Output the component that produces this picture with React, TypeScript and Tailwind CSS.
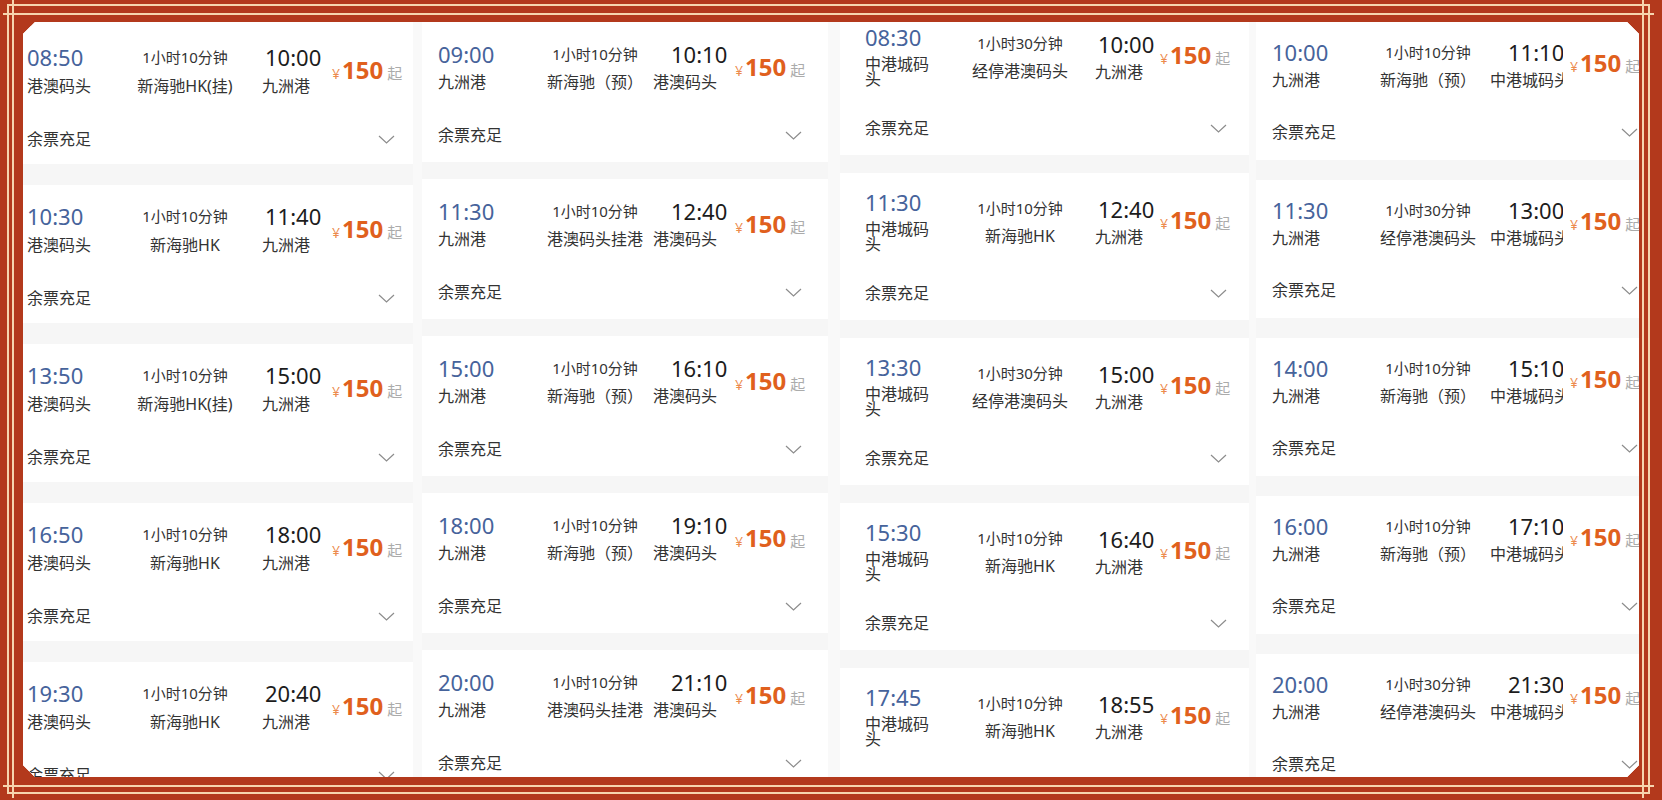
import React from "react";

type Trip = [string, string, string, string, string, string];

type Col = {
  box: string;
  card: string;
  band: string;
  top: string;
  time: string;
  station: string;
  dur: string;
  via: string;
  arr: string;
  to: string;
  price: string;
  bottom: string;
  trips: Trip[];
};

const columns: Col[] = [
  {
    box: "w-[390px] pt-[4px]",
    card: "h-[138px]",
    band: "h-[21px]",
    top: "h-[102px] pl-[4px] pt-[17px]",
    time: "w-[103px]",
    station: "mt-[4px] leading-[22px] whitespace-nowrap",
    dur: "w-[110px]",
    via: "mt-[4px]",
    arr: "ml-[22px] w-[70px]",
    to: "mt-[4px]",
    price: "mt-[12px]",
    bottom: "pl-[4px] pr-[18px]",
    trips: [
      ["08:50", "港澳码头", "1小时10分钟", "新海驰HK(挂)", "10:00", "九洲港"],
      ["10:30", "港澳码头", "1小时10分钟", "新海驰HK", "11:40", "九洲港"],
      ["13:50", "港澳码头", "1小时10分钟", "新海驰HK(挂)", "15:00", "九洲港"],
      ["16:50", "港澳码头", "1小时10分钟", "新海驰HK", "18:00", "九洲港"],
      ["19:30", "港澳码头", "1小时10分钟", "新海驰HK", "20:40", "九洲港"],
    ],
  },
  {
    box: "ml-[9px] w-[406px]",
    card: "h-[140px]",
    band: "h-[17px]",
    top: "h-[102px] pl-[16px] pt-[18px]",
    time: "w-[102px]",
    station: "mt-[3px] leading-[22px] whitespace-nowrap",
    dur: "w-[110px]",
    via: "mt-[3px]",
    arr: "ml-[3px] w-[82px]",
    to: "mt-[3px]",
    price: "mt-[12px]",
    bottom: "pl-[16px] pr-[26px]",
    trips: [
      ["09:00", "九洲港", "1小时10分钟", "新海驰（预）", "10:10", "港澳码头"],
      ["11:30", "九洲港", "1小时10分钟", "港澳码头挂港", "12:40", "港澳码头"],
      ["15:00", "九洲港", "1小时10分钟", "新海驰（预）", "16:10", "港澳码头"],
      ["18:00", "九洲港", "1小时10分钟", "新海驰（预）", "19:10", "港澳码头"],
      ["20:00", "九洲港", "1小时10分钟", "港澳码头挂港", "21:10", "港澳码头"],
    ],
  },
  {
    box: "ml-[12px] -mt-[14px] w-[409px]",
    card: "h-[147px]",
    band: "h-[18px]",
    top: "h-[109px] pl-[25px] pt-[15px]",
    time: "w-[100px]",
    station: "mt-[6px] w-[66px] leading-[15px]",
    dur: "mt-[6px] w-[110px]",
    via: "mt-[3px]",
    arr: "mt-[7px] ml-[20px] w-[65px]",
    to: "mt-[3px]",
    price: "mt-[17px]",
    bottom: "pl-[25px] pr-[22px]",
    trips: [
      ["08:30", "中港城码头", "1小时30分钟", "经停港澳码头", "10:00", "九洲港"],
      ["11:30", "中港城码头", "1小时10分钟", "新海驰HK", "12:40", "九洲港"],
      ["13:30", "中港城码头", "1小时30分钟", "经停港澳码头", "15:00", "九洲港"],
      ["15:30", "中港城码头", "1小时10分钟", "新海驰HK", "16:40", "九洲港"],
      ["17:45", "中港城码头", "1小时10分钟", "新海驰HK", "18:55", "九洲港"],
    ],
  },
  {
    box: "ml-[7px] w-[400px]",
    card: "h-[138px]",
    band: "h-[20px]",
    top: "h-[99px] pl-[16px] pt-[16px]",
    time: "w-[101px]",
    station: "mt-[3px] leading-[22px] whitespace-nowrap",
    dur: "w-[110px]",
    via: "mt-[3px]",
    arr: "ml-[7px] w-[73px]",
    to: "mt-[3px]",
    price: "ml-[7px] mt-[10px]",
    bottom: "pl-[16px] pr-[18px]",
    trips: [
      ["10:00", "九洲港", "1小时10分钟", "新海驰（预）", "11:10", "中港城码头"],
      ["11:30", "九洲港", "1小时30分钟", "经停港澳码头", "13:00", "中港城码头"],
      ["14:00", "九洲港", "1小时10分钟", "新海驰（预）", "15:10", "中港城码头"],
      ["16:00", "九洲港", "1小时10分钟", "新海驰（预）", "17:10", "中港城码头"],
      ["20:00", "九洲港", "1小时30分钟", "经停港澳码头", "21:30", "中港城码头"],
    ],
  },
];

function Chevron() {
  return (
    <svg width="17" height="9" viewBox="0 0 17 9" fill="none">
      <polyline points="1,1 8.5,8 16,1" stroke="#8c8c8c" strokeWidth="1.2" />
    </svg>
  );
}

function Card({ c, t }: { c: Col; t: Trip }) {
  const [dep, from, dur, via, arr, to] = t;
  return (
    <div className={`${c.card} shrink-0 bg-white`}>
      <div className={`flex items-start ${c.top}`}>
        <div className={`${c.time} shrink-0`}>
          <div className="text-[22px] leading-[28px] text-[#46639b]">{dep}</div>
          <div className={`text-[16px] text-[#333] ${c.station}`}>{from}</div>
        </div>
        <div className={`${c.dur} shrink-0 text-center`}>
          <div className="text-[15px] leading-[28px] text-[#333]">{dur}</div>
          <div className={`whitespace-nowrap text-[16px] leading-[22px] text-[#333] ${c.via}`}>{via}</div>
        </div>
        <div className={`${c.arr} shrink-0 overflow-hidden`}>
          <div className={`text-[22px] leading-[28px] text-[#1c1c1c] ${to === "九洲港" ? "ml-[3px]" : "ml-[18px]"}`}>{arr}</div>
          <div className={`whitespace-nowrap text-[16px] leading-[22px] text-[#333] ${c.to}`}>{to}</div>
        </div>
        <div className={`flex shrink-0 items-baseline whitespace-nowrap ${c.price}`}>
          <span className="text-[14px] text-[#ec8a4c]">¥</span>
          <span className="ml-[2px] text-[24px] font-bold leading-[30px] text-[#e0601d]">150</span>
          <span className="ml-[4px] text-[15px] text-[#ababab]">起</span>
        </div>
      </div>
      <div className={`flex h-[22px] items-center justify-between ${c.bottom}`}>
        <span className="text-[16px] leading-[22px] text-[#333]">余票充足</span>
        <Chevron />
      </div>
    </div>
  );
}

function Column({ c }: { c: Col }) {
  return (
    <div className={`${c.box} flex shrink-0 flex-col overflow-hidden bg-white`}>
      {c.trips.map((t, i) => (
        <React.Fragment key={t[0] + i}>
          <Card c={c} t={t} />
          <div className={`${c.band} shrink-0 bg-[#f6f6f6]`} />
        </React.Fragment>
      ))}
    </div>
  );
}

// corner knot of the frame; vo/vi = outer/inner vertical line, ho/hi = outer/inner horizontal line
function Knot({ pos, vo, vi, ho, hi }: { pos: string; vo: number; vi: number; ho: number; hi: number }) {
  const flipX = pos.includes("right");
  const flipY = pos.includes("bottom");
  const tr = `translate(${flipX ? 26 : 0},${flipY ? 26 : 0}) scale(${flipX ? -1 : 1},${flipY ? -1 : 1})`;
  return (
    <svg className={`absolute ${pos}`} width="26" height="26" viewBox="0 0 26 26">
      <g transform={tr} stroke="#f6d5ae" strokeWidth="2" fill="none">
        <line x1={vo - 5} y1={hi} x2={vi + 1} y2={hi} />
        <line x1={vi} y1={ho - 5} x2={vi} y2={hi + 1} />
        <line x1={vo} y1={ho - 1} x2={vo} y2={hi + 6} />
      </g>
    </svg>
  );
}

export default function App() {
  return (
    <div className="relative h-[800px] w-full overflow-hidden bg-[#b3391c] pt-[4px] pr-[12px] pb-[6px] pl-[7px] font-['Noto_Sans','Noto_Sans_CJK_SC',sans-serif]">
      <div className="h-full border-2 border-[#f6d5ae] pt-[7px] pr-[4px] pb-[5px] pl-[3px]">
        <div className="h-full border-2 border-[#f6d5ae] pt-[7px] pr-[3px] pb-[8px] pl-[9px]">
          <div className="flex h-full overflow-hidden bg-[#f9f9f9] [clip-path:polygon(12px_0,calc(100%_-_12px)_0,100%_12px,100%_calc(100%_-_12px),calc(100%_-_12px)_100%,12px_100%,0_calc(100%_-_12px),0_12px)]">
            {columns.map((c, i) => (
              <Column key={i} c={c} />
            ))}
          </div>
        </div>
      </div>
      <Knot pos="left-0 top-0" vo={8} vi={13} ho={5} hi={14} />
      <Knot pos="right-0 top-0" vo={13} vi={19} ho={5} hi={14} />
      <Knot pos="left-0 bottom-0" vo={8} vi={13} ho={7} hi={14} />
      <Knot pos="right-0 bottom-0" vo={13} vi={19} ho={7} hi={14} />
    </div>
  );
}
